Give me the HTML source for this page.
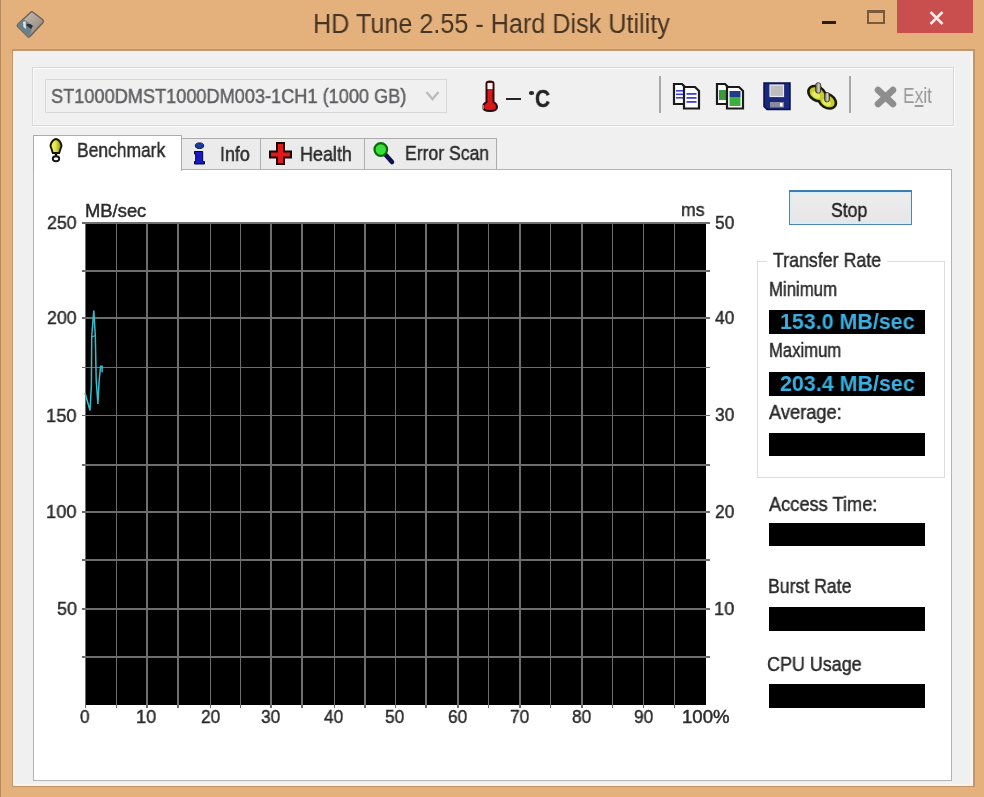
<!DOCTYPE html>
<html><head><meta charset="utf-8">
<style>
*{margin:0;padding:0;box-sizing:border-box}
html,body{width:984px;height:797px;overflow:hidden}
body{background:#E4B17C;position:relative;font-family:"Liberation Sans",sans-serif;color:#222}
.a{position:absolute}
.t{position:absolute;white-space:pre;transform-origin:0 0;line-height:1;font-family:"Liberation Sans",sans-serif;will-change:transform}
.box{position:absolute;background:#000}
.g{position:absolute;background:#6E6E6E}
</style></head><body>
<div style="position:absolute;left:0;top:0;width:984px;height:797px;filter:blur(0.5px)">
<div class="a" style="left:0;top:0;width:1.3px;height:797px;background:#B98A5A"></div>
<svg class="a" style="left:14px;top:8px" width="32" height="32" viewBox="0 0 32 32">
  <defs><linearGradient id="hd" x1="0" y1="0" x2="1" y2="1"><stop offset="0" stop-color="#CFC4B8"/><stop offset="1" stop-color="#8A8076"/></linearGradient></defs>
  <path d="M17 4 Q18 3.5 19 4.3 L28.5 11.5 Q30 13 29 14.5 L16 28.5 Q14.8 29.6 13.6 28.6 L3.6 18.6 Q2.6 17.4 3.8 16.2 Z" fill="url(#hd)" stroke="#6A6058" stroke-width="1.4"/>
  <path d="M3.8 16.2 L9.5 11.5 Q14 13 18 19 L16 28.5 Q14.8 29.6 13.6 28.6 L3.6 18.6 Z" fill="#6C8088"/>
  <path d="M9 14 L11.5 13 L12 21 L9.5 19 Z" fill="#DCE8EA"/>
  <path d="M12 17 Q15 14 19 18 L17 21 Z" fill="#2A3038"/>
</svg>
<div class="a" style="left:822px;top:21px;width:14px;height:3px;background:#2A1C0E"></div>
<div class="a" style="left:866.5px;top:9.5px;width:18px;height:14px;border:2px solid #7A5A3A;border-top-width:3.2px"></div>
<div class="a" style="left:897px;top:0;width:76px;height:33px;background:#C94F4F"></div>
<svg class="a" style="left:929px;top:11px" width="15" height="14" viewBox="0 0 15 14">
  <path d="M1.5 1 L13.5 13 M13.5 1 L1.5 13" stroke="#FBE8E8" stroke-width="2.6"/>
</svg>
<div class="a" style="left:11.5px;top:48.5px;width:963px;height:738.5px;background:#BF9670"></div>
<div class="a" style="left:13.3px;top:50.5px;width:959.5px;height:735px;background:#FFF3E6"></div>
<div class="a" style="left:14.8px;top:52.3px;width:956.5px;height:731.5px;background:#F0F0F0"></div>
<div class="a" style="left:32.3px;top:66.5px;width:921.5px;height:59.5px;border:1px solid #D8D8D8;box-shadow:inset 1px 1px 0 #FBFBFB, 1px 1px 0 #FBFBFB"></div>
<div class="a" style="left:45px;top:79px;width:402px;height:34px;border:1px solid #D9D9D9;background:#F0F0F0"></div>
<svg class="a" style="left:425px;top:90px" width="15" height="12" viewBox="0 0 15 12">
  <path d="M1.5 2 L7.5 9 L13.5 2" fill="none" stroke="#BDBDBD" stroke-width="2.5"/>
</svg>
<!-- thermometer -->
<svg class="a" style="left:480px;top:80px" width="20" height="33" viewBox="0 0 20 33">
  <path d="M6.5 3.5 Q6.5 1.5 10 1.5 Q13.5 1.5 13.5 3.5 L13.5 22 Q17 24 17 27 Q17 31 10 31 Q3 31 3 27 Q3 24 6.5 22 Z" fill="#D81818" stroke="#2A0A0A" stroke-width="2"/>
  <rect x="7.5" y="3" width="5" height="6" fill="#F4F4F4"/>
  <path d="M3 25 L3 29" stroke="#888" stroke-width="2"/>
</svg>
<div class="a" style="left:506px;top:97.8px;width:15px;height:2.6px;background:#262626"></div>
<div class="a" style="left:528.5px;top:90.8px;width:5px;height:4.5px;border-radius:40%;background:#2A2A2A"></div>
<!-- separators -->
<div class="a" style="left:659px;top:76px;width:2px;height:37px;background:#A8A8A8"></div>
<div class="a" style="left:849px;top:76px;width:2px;height:37px;background:#A8A8A8"></div>
<!-- copy text icon -->
<svg class="a" style="left:672px;top:82px" width="30" height="29" viewBox="0 0 30 29">
  <path d="M2 2 L10 2 L12.5 4.5 L12.5 22 L2 22 Z" fill="#fff" stroke="#1A1A1A" stroke-width="2.2"/>
  <rect x="4" y="8" width="8" height="1.6" fill="#4040E0"/><rect x="4" y="11.5" width="8" height="1.6" fill="#4040E0"/><rect x="4" y="15" width="8" height="1.6" fill="#4040E0"/>
  <path d="M12 5 L23 5 L27 9 L27 26.5 L12 26.5 Z" fill="#fff" stroke="#1A1A1A" stroke-width="2.2"/>
  <rect x="14.5" y="11" width="10" height="1.8" fill="#4040E0"/><rect x="14.5" y="15" width="10" height="1.8" fill="#4040E0"/><rect x="14.5" y="19" width="10" height="1.8" fill="#4040E0"/>
</svg>
<!-- copy image icon -->
<svg class="a" style="left:715px;top:82px" width="31" height="29" viewBox="0 0 31 29">
  <path d="M2 2 L10 2 L12.5 4.5 L12.5 22 L2 22 Z" fill="#fff" stroke="#1A1A1A" stroke-width="2.2"/>
  <rect x="4" y="8" width="8" height="10" fill="#3A9A3A"/>
  <path d="M12 5 L24 5 L28 9 L28 26.5 L12 26.5 Z" fill="#fff" stroke="#1A1A1A" stroke-width="2.2"/>
  <rect x="14.5" y="9" width="11" height="6" fill="#1E3C8A"/><rect x="14.5" y="15" width="11" height="9" fill="#3CB03C"/>
</svg>
<!-- floppy -->
<svg class="a" style="left:763px;top:82px" width="28" height="29" viewBox="0 0 28 29">
  <path d="M1 1 L27 1 L27 27.5 L4 27.5 L1 24.5 Z" fill="#1A287E" stroke="#0A1048" stroke-width="1.5"/>
  <rect x="7" y="3" width="13.5" height="11.5" fill="#BDBDBD" stroke="#E8E8F0" stroke-width="1.2"/>
  <rect x="7" y="20" width="14" height="5.5" fill="#8A8A9A"/>
  <rect x="17" y="21" width="2.5" height="3.5" fill="#fff"/>
</svg>
<!-- options icon -->
<svg class="a" style="left:802px;top:78px" width="40" height="34" viewBox="0 0 40 34">
  <defs><linearGradient id="pin" x1="0" x2="1"><stop offset="0" stop-color="#5A5A50"/><stop offset="0.6" stop-color="#D8D4C0"/><stop offset="1" stop-color="#77776A"/></linearGradient></defs>
  <g stroke="#1A1A00" stroke-width="5"><ellipse cx="15" cy="15.6" rx="8" ry="5.6" transform="rotate(32 15 15.6)"/><ellipse cx="25.3" cy="23" rx="8" ry="5.6" transform="rotate(32 25.3 23)"/></g>
  <g fill="#C6CC2C"><ellipse cx="15" cy="15.6" rx="8" ry="5.6" transform="rotate(32 15 15.6)"/><ellipse cx="25.3" cy="23" rx="8" ry="5.6" transform="rotate(32 25.3 23)"/></g>
  <ellipse cx="14" cy="17" rx="4.5" ry="3" fill="#E4EC60" transform="rotate(32 14 17)"/><ellipse cx="24.5" cy="24.5" rx="4.5" ry="3" fill="#E4EC60" transform="rotate(32 24.5 24.5)"/>
  <rect x="13.6" y="4.7" width="5.2" height="10.5" rx="2.5" fill="url(#pin)" stroke="#2A2A20" stroke-width="0.8"/>
  <rect x="22.6" y="14.5" width="4.8" height="9.5" rx="2.3" fill="url(#pin)" stroke="#2A2A20" stroke-width="0.8"/>
</svg>
<!-- exit icon -->
<svg class="a" style="left:874px;top:86px" width="23" height="22" viewBox="0 0 23 22">
  <path d="M4 4 L19 18 M19 4 L4 18" stroke="#8E8E8E" stroke-width="6.5" stroke-linecap="round"/>
</svg>

<div class="a" style="left:32.5px;top:169px;width:919.3px;height:611.8px;border:1.7px solid #B3B3B3;background:#FFF"></div>
<div class="a" style="left:180px;top:138px;width:81px;height:31.2px;border:1.5px solid #ACACAC;border-bottom:none;background:#EBEBEB"></div>
<div class="a" style="left:259.5px;top:138px;width:105px;height:31.2px;border:1.5px solid #ACACAC;border-bottom:none;background:#EBEBEB"></div>
<div class="a" style="left:363.5px;top:138px;width:133px;height:31.2px;border:1.5px solid #ACACAC;border-bottom:none;background:#EBEBEB"></div>
<div class="a" style="left:32.5px;top:135px;width:149px;height:36px;border:1.5px solid #ACACAC;border-bottom:none;background:#FFF"></div>

<svg class="a" style="left:44px;top:134px" width="26" height="32" viewBox="0 0 26 32">
  <defs><linearGradient id="bulb" x1="0" x2="1"><stop offset="0" stop-color="#F4F49A"/><stop offset="0.45" stop-color="#E6E640"/><stop offset="1" stop-color="#8A8A10"/></linearGradient></defs>
  <path d="M12 5 Q9 5.5 7.3 9 Q5.8 12 7.3 14.2 L8.8 19 L15.2 19 L16.7 14.2 Q18.2 12 16.7 9 Q15 5.5 12 5 Z" fill="url(#bulb)" stroke="#141400" stroke-width="1.9"/>
  <circle cx="12" cy="20.8" r="1.3" fill="#111"/>
  <ellipse cx="12" cy="24.7" rx="3.2" ry="2.5" fill="#fff" stroke="#111" stroke-width="1.9"/>
</svg>
<svg class="a" style="left:193px;top:142px" width="13" height="23" viewBox="0 0 13 23">
  <ellipse cx="6.5" cy="3.7" rx="4.2" ry="2.8" fill="#1E3C9C" stroke="#0A1A50" stroke-width="1"/>
  <path d="M1.5 9.5 L9.7 9.5 L9.7 19.5 L11.5 19.5 L11.5 22 L1.5 22 L1.5 19.5 L2.7 19.5 L2.7 12 L1.5 12 Z" fill="#1818C8" stroke="#05052A" stroke-width="1"/>
</svg>
<svg class="a" style="left:268px;top:141px" width="25" height="25" viewBox="0 0 25 25">
  <path d="M9 2 L16 2 L16 10.5 L23 10.5 L23 16.5 L16 16.5 L16 23 L9 23 L9 16.5 L2 16.5 L2 10.5 L9 10.5 Z" fill="#E01A1A" stroke="#1A0505" stroke-width="2"/>
</svg>
<svg class="a" style="left:372px;top:141px" width="24" height="25" viewBox="0 0 24 25">
  <path d="M12 12 L20 21" stroke="#101050" stroke-width="4.5" stroke-linecap="round"/>
  <circle cx="8.8" cy="8.5" r="6.3" fill="#3AE03A" stroke="#0A6A0A" stroke-width="2.2"/>
</svg>

<div class="a" style="left:85px;top:223.3px;width:620.5px;height:481.9px;background:#000"></div>
<div class="g" style="left:84.70px;top:223.3px;width:1.7px;height:484.4px"></div>
<div class="g" style="left:115.50px;top:223.3px;width:1.7px;height:484.4px"></div>
<div class="g" style="left:146.40px;top:223.3px;width:1.7px;height:484.4px"></div>
<div class="g" style="left:177.20px;top:223.3px;width:1.7px;height:484.4px"></div>
<div class="g" style="left:209.70px;top:223.3px;width:1.7px;height:484.4px"></div>
<div class="g" style="left:239.70px;top:223.3px;width:1.7px;height:484.4px"></div>
<div class="g" style="left:270.20px;top:223.3px;width:1.7px;height:484.4px"></div>
<div class="g" style="left:301.10px;top:223.3px;width:1.7px;height:484.4px"></div>
<div class="g" style="left:333.50px;top:223.3px;width:1.7px;height:484.4px"></div>
<div class="g" style="left:364.30px;top:223.3px;width:1.7px;height:484.4px"></div>
<div class="g" style="left:394.50px;top:223.3px;width:1.7px;height:484.4px"></div>
<div class="g" style="left:424.90px;top:223.3px;width:1.7px;height:484.4px"></div>
<div class="g" style="left:457.40px;top:223.3px;width:1.7px;height:484.4px"></div>
<div class="g" style="left:487.80px;top:223.3px;width:1.7px;height:484.4px"></div>
<div class="g" style="left:519.10px;top:223.3px;width:1.7px;height:484.4px"></div>
<div class="g" style="left:549.60px;top:223.3px;width:1.7px;height:484.4px"></div>
<div class="g" style="left:581.20px;top:223.3px;width:1.7px;height:484.4px"></div>
<div class="g" style="left:611.70px;top:223.3px;width:1.7px;height:484.4px"></div>
<div class="g" style="left:642.70px;top:223.3px;width:1.7px;height:484.4px"></div>
<div class="g" style="left:673.70px;top:223.3px;width:1.7px;height:484.4px"></div>
<div class="g" style="left:82px;top:222.45px;width:627.5px;height:1.7px"></div>
<div class="g" style="left:82px;top:269.85px;width:627.5px;height:1.7px"></div>
<div class="g" style="left:82px;top:317.35px;width:627.5px;height:1.7px"></div>
<div class="g" style="left:82px;top:366.55px;width:627.5px;height:1.7px"></div>
<div class="g" style="left:82px;top:414.75px;width:627.5px;height:1.7px"></div>
<div class="g" style="left:82px;top:463.95px;width:627.5px;height:1.7px"></div>
<div class="g" style="left:82px;top:511.35px;width:627.5px;height:1.7px"></div>
<div class="g" style="left:82px;top:558.85px;width:627.5px;height:1.7px"></div>
<div class="g" style="left:82px;top:608.45px;width:627.5px;height:1.7px"></div>
<div class="g" style="left:82px;top:655.85px;width:627.5px;height:1.7px"></div>
<svg class="a" style="left:80px;top:300px" width="30" height="120" viewBox="80 300 30 120">
<polyline points="85,393 90,410.5 91.4,385 91.7,337 93.8,310.5 95.3,335.5 96.2,380 97.9,404 99.1,381 100.6,366.3 102.1,366.3 102.1,372.3" fill="none" stroke="#36BCCC" stroke-width="1.5"/>
<polyline points="91.7,337 95.3,335.5" fill="none" stroke="#36BCCC" stroke-width="1.3"/>
</svg>

<div class="a" style="left:789px;top:190.3px;width:123px;height:35.2px;border:1.6px solid #4A86BC;border-top:2.4px solid #3F7CB4;box-shadow:inset 0 0 0 1.4px #D4EEFA;background:linear-gradient(#EDEDED,#E6E6E6)"></div>
<div class="a" style="left:757px;top:260.6px;width:187.5px;height:217.5px;border:1px solid #DCDCDC"></div>
<div class="a" style="left:767px;top:250px;width:120px;height:20px;background:#FFF"></div>
<div class="box" style="left:769px;top:309.8px;width:156px;height:23.8px"></div>
<div class="box" style="left:769px;top:371.8px;width:156px;height:23.8px"></div>
<div class="box" style="left:769px;top:432.6px;width:156px;height:23.8px"></div>
<div class="box" style="left:769.3px;top:522.8px;width:156px;height:23.7px"></div>
<div class="box" style="left:769.3px;top:606.5px;width:156px;height:24px"></div>
<div class="box" style="left:769.3px;top:683.7px;width:156px;height:24.4px"></div>
<div class='t' style='left:313.13px;top:10.89px;font-size:27px;color:#463524;font-weight:400;transform:scaleX(0.9329);'>HD Tune 2.55 - Hard Disk Utility</div>
<div class='t' style='left:51.20px;top:86.09px;font-size:20.6px;color:#606064;font-weight:400;transform:scaleX(0.8820);-webkit-text-stroke:0.45px currentColor;'>ST1000DMST1000DM003-1CH1 (1000 GB)</div>
<div class='t' style='left:534.65px;top:86.50px;font-size:24.5px;color:#222;font-weight:700;transform:scaleX(0.8529);-webkit-text-stroke:0.45px currentColor;'>C</div>
<div class='t' style='left:902.71px;top:85.21px;font-size:22px;color:#9A9A9A;font-weight:400;transform:scaleX(0.7902);'>E<u>x</u>it</div>
<div class='t' style='left:77.15px;top:139.98px;font-size:20.5px;color:#2A2A2A;font-weight:400;transform:scaleX(0.8508);-webkit-text-stroke:0.45px currentColor;'>Benchmark</div>
<div class='t' style='left:219.53px;top:143.88px;font-size:20.5px;color:#2A2A2A;font-weight:400;transform:scaleX(0.8722);-webkit-text-stroke:0.45px currentColor;'>Info</div>
<div class='t' style='left:300.42px;top:143.88px;font-size:20.5px;color:#2A2A2A;font-weight:400;transform:scaleX(0.8763);-webkit-text-stroke:0.45px currentColor;'>Health</div>
<div class='t' style='left:404.54px;top:143.48px;font-size:20.5px;color:#2A2A2A;font-weight:400;transform:scaleX(0.8584);-webkit-text-stroke:0.45px currentColor;'>Error Scan</div>
<div class='t' style='left:85.00px;top:202.15px;font-size:18.4px;color:#2A2A2A;font-weight:400;transform:scaleX(0.9980);-webkit-text-stroke:0.45px currentColor;'>MB/sec</div>
<div class='t' style='left:681.46px;top:201.03px;font-size:18.9px;color:#2A2A2A;font-weight:400;transform:scaleX(0.9353);-webkit-text-stroke:0.45px currentColor;'>ms</div>
<div class='t' style='left:46.80px;top:213.38px;font-size:19.2px;color:#2A2A2A;font-weight:400;transform:scaleX(0.9253);-webkit-text-stroke:0.45px currentColor;'>250</div>
<div class='t' style='left:46.80px;top:308.28px;font-size:19.2px;color:#2A2A2A;font-weight:400;transform:scaleX(0.9253);-webkit-text-stroke:0.45px currentColor;'>200</div>
<div class='t' style='left:45.84px;top:405.68px;font-size:19.2px;color:#2A2A2A;font-weight:400;transform:scaleX(0.9558);-webkit-text-stroke:0.45px currentColor;'>150</div>
<div class='t' style='left:45.84px;top:502.28px;font-size:19.2px;color:#2A2A2A;font-weight:400;transform:scaleX(0.9558);-webkit-text-stroke:0.45px currentColor;'>100</div>
<div class='t' style='left:56.50px;top:599.38px;font-size:19.2px;color:#2A2A2A;font-weight:400;transform:scaleX(0.9337);-webkit-text-stroke:0.45px currentColor;'>50</div>
<div class='t' style='left:714.60px;top:213.08px;font-size:19.2px;color:#2A2A2A;font-weight:400;transform:scaleX(0.9046);-webkit-text-stroke:0.45px currentColor;'>50</div>
<div class='t' style='left:714.60px;top:307.98px;font-size:19.2px;color:#2A2A2A;font-weight:400;transform:scaleX(0.9046);-webkit-text-stroke:0.45px currentColor;'>40</div>
<div class='t' style='left:714.60px;top:405.38px;font-size:19.2px;color:#2A2A2A;font-weight:400;transform:scaleX(0.9046);-webkit-text-stroke:0.45px currentColor;'>30</div>
<div class='t' style='left:714.60px;top:501.98px;font-size:19.2px;color:#2A2A2A;font-weight:400;transform:scaleX(0.9046);-webkit-text-stroke:0.45px currentColor;'>20</div>
<div class='t' style='left:713.65px;top:599.08px;font-size:19.2px;color:#2A2A2A;font-weight:400;transform:scaleX(0.9506);-webkit-text-stroke:0.45px currentColor;'>10</div>
<div class='t' style='left:80.35px;top:707.67px;font-size:18.5px;color:#2A2A2A;font-weight:400;transform:scaleX(0.9300);-webkit-text-stroke:0.45px currentColor;'>0</div>
<div class='t' style='left:136.21px;top:707.67px;font-size:18.5px;color:#2A2A2A;font-weight:400;transform:scaleX(0.9850);-webkit-text-stroke:0.45px currentColor;'>10</div>
<div class='t' style='left:200.50px;top:707.67px;font-size:18.5px;color:#2A2A2A;font-weight:400;transform:scaleX(0.9365);-webkit-text-stroke:0.45px currentColor;'>20</div>
<div class='t' style='left:261.00px;top:707.67px;font-size:18.5px;color:#2A2A2A;font-weight:400;transform:scaleX(0.9365);-webkit-text-stroke:0.45px currentColor;'>30</div>
<div class='t' style='left:324.30px;top:707.67px;font-size:18.5px;color:#2A2A2A;font-weight:400;transform:scaleX(0.9365);-webkit-text-stroke:0.45px currentColor;'>40</div>
<div class='t' style='left:385.30px;top:707.67px;font-size:18.5px;color:#2A2A2A;font-weight:400;transform:scaleX(0.9365);-webkit-text-stroke:0.45px currentColor;'>50</div>
<div class='t' style='left:448.20px;top:707.67px;font-size:18.5px;color:#2A2A2A;font-weight:400;transform:scaleX(0.9365);-webkit-text-stroke:0.45px currentColor;'>60</div>
<div class='t' style='left:509.90px;top:707.67px;font-size:18.5px;color:#2A2A2A;font-weight:400;transform:scaleX(0.9365);-webkit-text-stroke:0.45px currentColor;'>70</div>
<div class='t' style='left:572.00px;top:707.67px;font-size:18.5px;color:#2A2A2A;font-weight:400;transform:scaleX(0.9365);-webkit-text-stroke:0.45px currentColor;'>80</div>
<div class='t' style='left:633.50px;top:707.67px;font-size:18.5px;color:#2A2A2A;font-weight:400;transform:scaleX(0.9365);-webkit-text-stroke:0.45px currentColor;'>90</div>
<div class='t' style='left:681.89px;top:707.67px;font-size:18.5px;color:#2A2A2A;font-weight:400;transform:scaleX(1.0073);-webkit-text-stroke:0.45px currentColor;'>100%</div>
<div class='t' style='left:831.30px;top:198.66px;font-size:21px;color:#1E1E1E;font-weight:400;transform:scaleX(0.8396);-webkit-text-stroke:0.45px currentColor;'>Stop</div>
<div class='t' style='left:772.50px;top:250.29px;font-size:20.6px;color:#2A2A2A;font-weight:400;transform:scaleX(0.8638);-webkit-text-stroke:0.45px currentColor;'>Transfer Rate</div>
<div class='t' style='left:769.15px;top:280.34px;font-size:19.6px;color:#2A2A2A;font-weight:400;transform:scaleX(0.8548);-webkit-text-stroke:0.45px currentColor;'>Minimum</div>
<div class='t' style='left:768.65px;top:340.94px;font-size:19.6px;color:#2A2A2A;font-weight:400;transform:scaleX(0.8506);-webkit-text-stroke:0.45px currentColor;'>Maximum</div>
<div class='t' style='left:768.60px;top:402.94px;font-size:19.6px;color:#2A2A2A;font-weight:400;transform:scaleX(0.9318);-webkit-text-stroke:0.45px currentColor;'>Average:</div>
<div class='t' style='left:768.60px;top:495.14px;font-size:19.6px;color:#2A2A2A;font-weight:400;transform:scaleX(0.9306);-webkit-text-stroke:0.45px currentColor;'>Access Time:</div>
<div class='t' style='left:768.10px;top:577.44px;font-size:19.6px;color:#2A2A2A;font-weight:400;transform:scaleX(0.9011);-webkit-text-stroke:0.45px currentColor;'>Burst Rate</div>
<div class='t' style='left:767.09px;top:655.34px;font-size:19.6px;color:#2A2A2A;font-weight:400;transform:scaleX(0.9146);-webkit-text-stroke:0.45px currentColor;'>CPU Usage</div>
<div class='t' style='left:780.01px;top:311.26px;font-size:21.7px;color:#38B0E2;font-weight:700;transform:scaleX(0.9876);'>153.0 MB/sec</div>
<div class='t' style='left:779.80px;top:372.96px;font-size:21.7px;color:#38B0E2;font-weight:700;transform:scaleX(0.9892);'>203.4 MB/sec</div>
</div></body></html>
